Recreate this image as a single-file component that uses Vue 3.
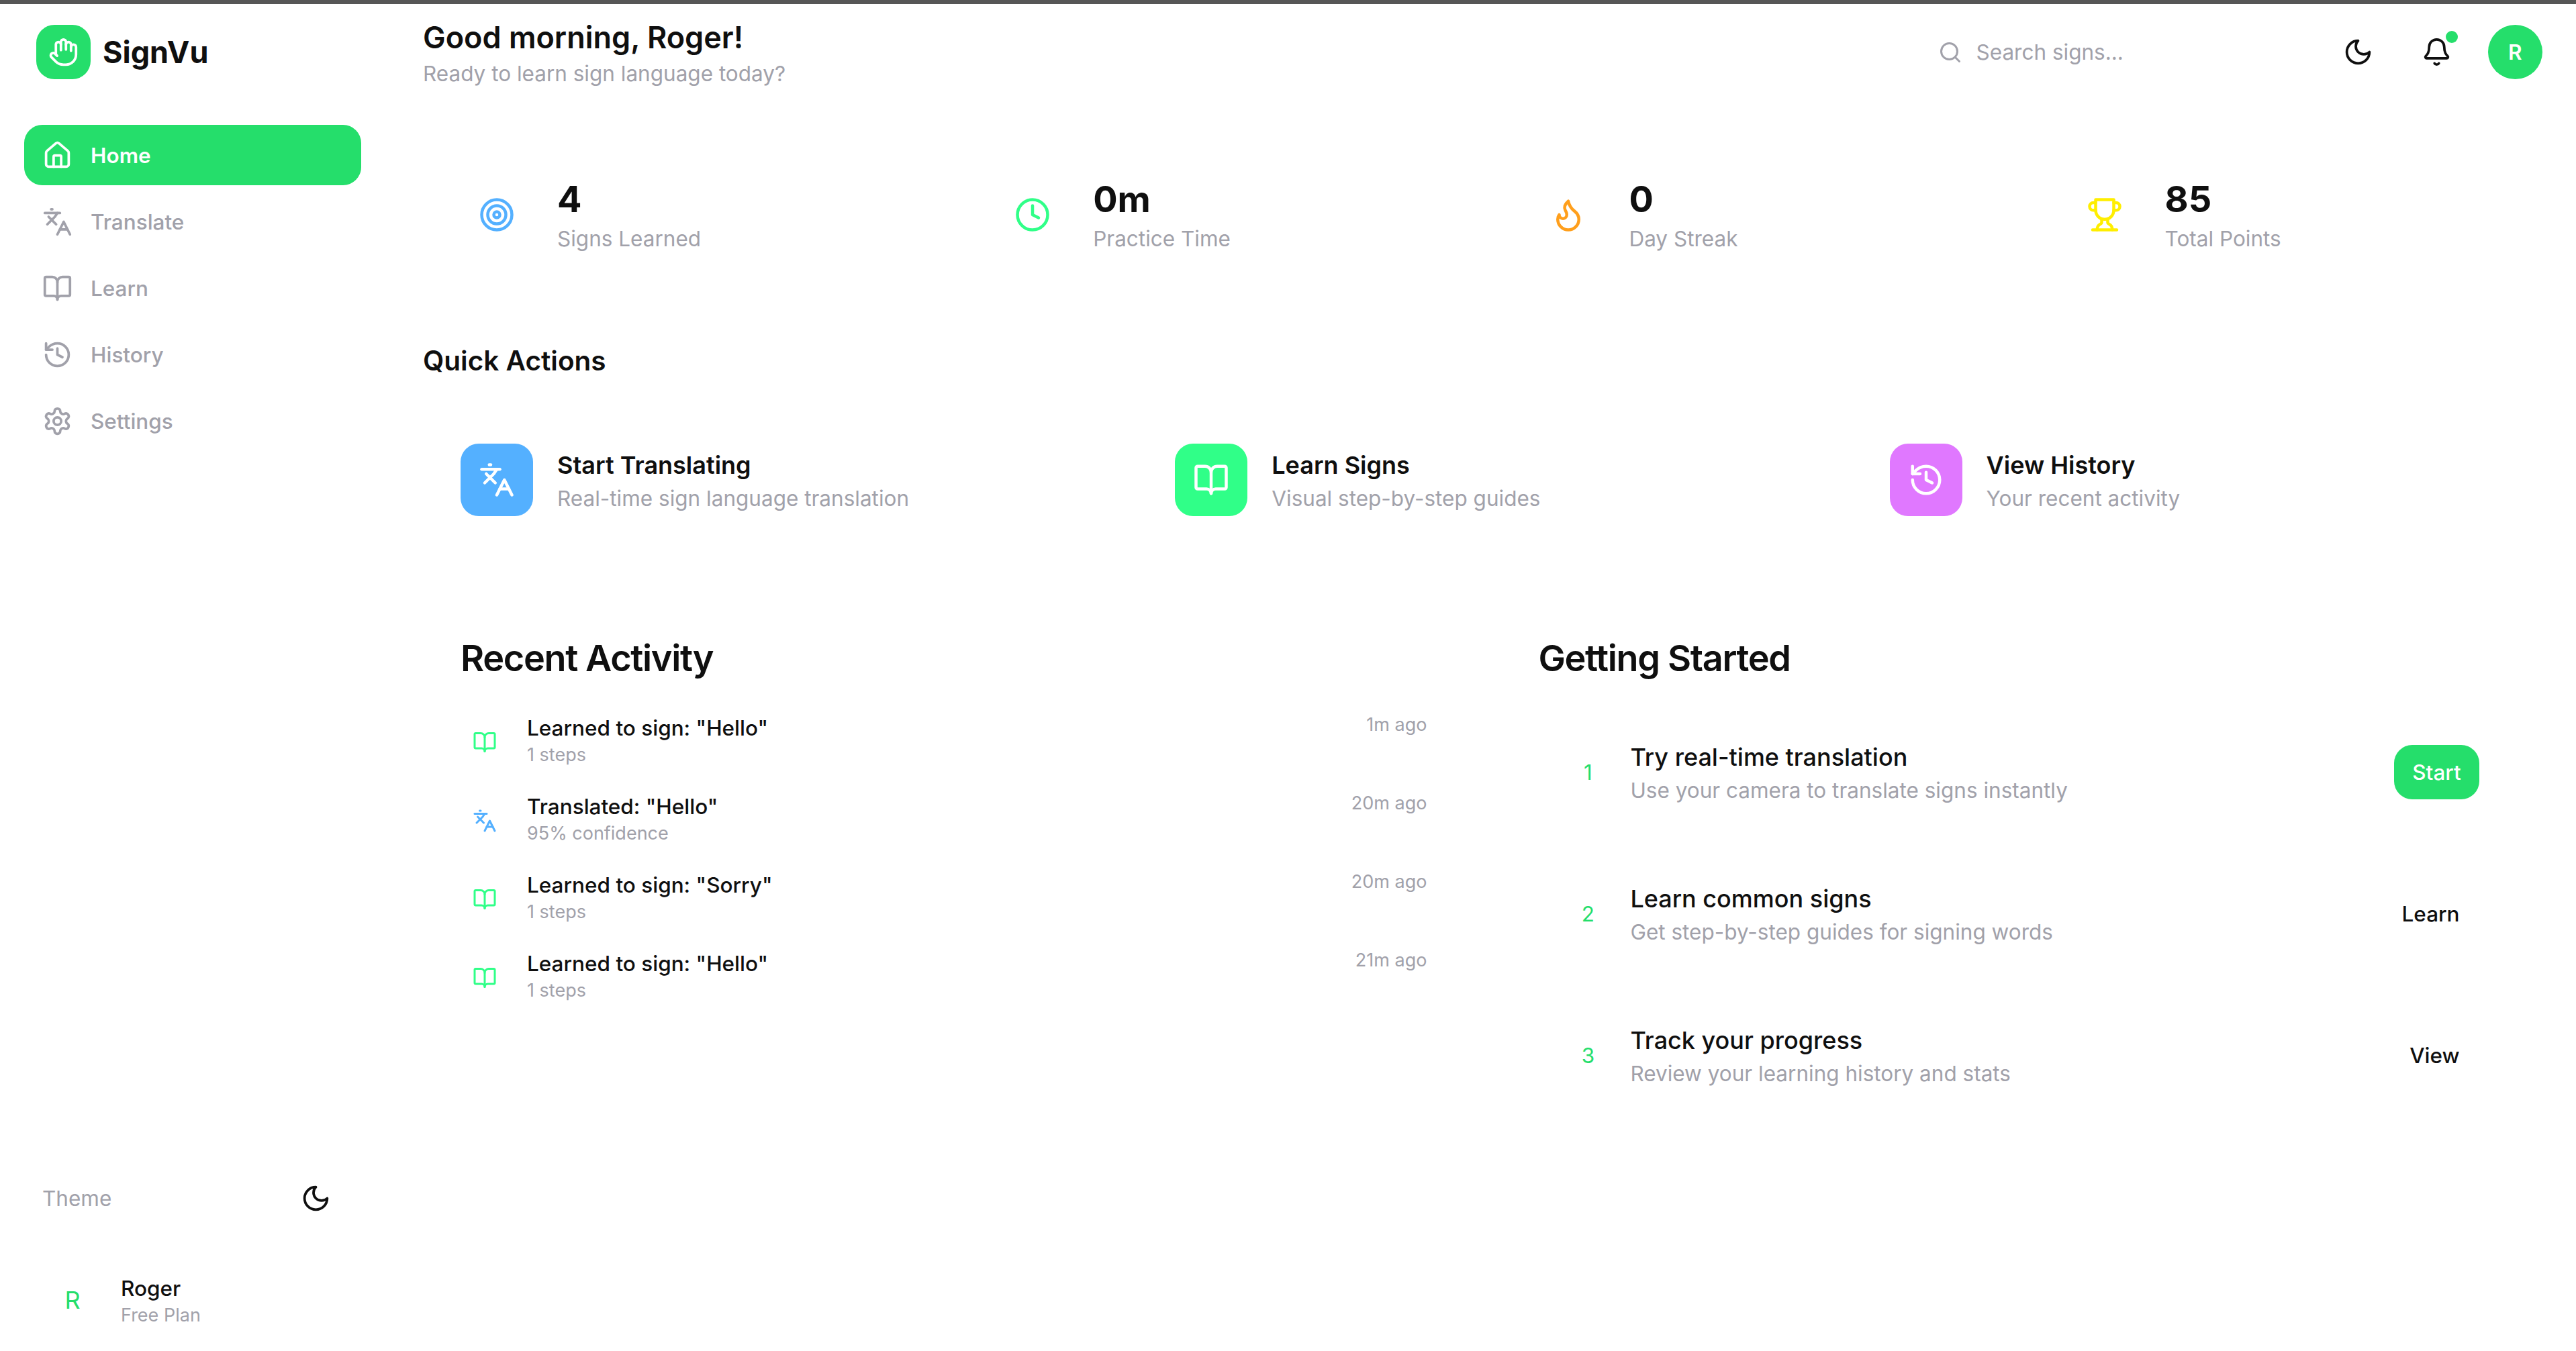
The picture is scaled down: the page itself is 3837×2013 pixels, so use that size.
<script setup>
const ic = {
  home: ['M15 21v-8a1 1 0 0 0-1-1h-4a1 1 0 0 0-1 1v8', 'M3 10a2 2 0 0 1 .709-1.528l7-5.999a2 2 0 0 1 2.582 0l7 5.999A2 2 0 0 1 21 10v9a2 2 0 0 1-2 2H5a2 2 0 0 1-2-2z'],
  translate: ['m5 8 6 6', 'm4 14 6-6 2-3', 'M2 5h12', 'M7 2h1', 'm22 22-5-10-5 10', 'M14 18h6'],
  book: ['M12 7v14', 'M3 18a1 1 0 0 1-1-1V4a1 1 0 0 1 1-1h5a4 4 0 0 1 4 4 4 4 0 0 1 4-4h5a1 1 0 0 1 1 1v13a1 1 0 0 1-1 1h-6a3 3 0 0 0-3 3 3 3 0 0 0-3-3z'],
  history: ['M3 12a9 9 0 1 0 9-9 9.75 9.75 0 0 0-6.74 2.74L3 8', 'M3 3v5h5', 'M12 7v5l4 2'],
  gear: ['M12.22 2h-.44a2 2 0 0 0-2 2v.18a2 2 0 0 1-1 1.73l-.43.25a2 2 0 0 1-2 0l-.15-.08a2 2 0 0 0-2.73.73l-.22.38a2 2 0 0 0 .73 2.73l.15.1a2 2 0 0 1 1 1.72v.51a2 2 0 0 1-1 1.74l-.15.09a2 2 0 0 0-.73 2.73l.22.38a2 2 0 0 0 2.73.73l.15-.08a2 2 0 0 1 2 0l.43.25a2 2 0 0 1 1 1.73V20a2 2 0 0 0 2 2h.44a2 2 0 0 0 2-2v-.18a2 2 0 0 1 1-1.73l.43-.25a2 2 0 0 1 2 0l.15.08a2 2 0 0 0 2.73-.73l.22-.39a2 2 0 0 0-.73-2.73l-.15-.08a2 2 0 0 1-1-1.74v-.5a2 2 0 0 1 1-1.74l.15-.09a2 2 0 0 0 .73-2.73l-.22-.38a2 2 0 0 0-2.73-.73l-.15.08a2 2 0 0 1-2 0l-.43-.25a2 2 0 0 1-1-1.73V4a2 2 0 0 0-2-2z', 'M15 12a3 3 0 1 1-6 0 3 3 0 0 1 6 0z'],
  moon: ['M12 3a6 6 0 0 0 9 9 9 9 0 1 1-9-9Z'],
  bell: ['M10.268 21a2 2 0 0 0 3.464 0', 'M3.262 15.326A1 1 0 0 0 4 17h16a1 1 0 0 0 .74-1.673C19.41 13.956 18 12.499 18 8A6 6 0 0 0 6 8c0 4.499-1.411 5.956-2.738 7.326'],
  search: ['m21 21-4.34-4.34', 'M19 11a8 8 0 1 1-16 0 8 8 0 0 1 16 0z'],
  target: ['M22 12a10 10 0 1 1-20 0 10 10 0 0 1 20 0z', 'M18 12a6 6 0 1 1-12 0 6 6 0 0 1 12 0z', 'M14 12a2 2 0 1 1-4 0 2 2 0 0 1 4 0z'],
  clock: ['M22 12a10 10 0 1 1-20 0 10 10 0 0 1 20 0z', 'M12 6v6l4 2'],
  flame: ['M8.5 14.5A2.5 2.5 0 0 0 11 12c0-1.38-.5-2-1-3-1.072-2.143-.224-4.054 2-6 .5 2.5 2 4.9 4 6.5 2 1.6 3 3.5 3 5.5a7 7 0 1 1-14 0c0-1.153.433-2.294 1-3a2.5 2.5 0 0 0 2.5 2.5z'],
  trophy: ['M6 9H4.5a2.5 2.5 0 0 1 0-5H6', 'M18 9h1.5a2.5 2.5 0 0 0 0-5H18', 'M4 22h16', 'M10 14.66V17c0 .55-.47.98-.97 1.21C7.85 18.75 7 20.24 7 22', 'M14 14.66V17c0 .55.47.98.97 1.21C16.15 18.75 17 20.24 17 22', 'M18 2H6v7a6 6 0 0 0 12 0V2Z'],
  hand: ['M18 11V6a2 2 0 0 0-2-2a2 2 0 0 0-2 2', 'M14 10V4a2 2 0 0 0-2-2a2 2 0 0 0-2 2v2', 'M10 10.5V6a2 2 0 0 0-2-2a2 2 0 0 0-2 2v8', 'M18 8a2 2 0 1 1 4 0v6a8 8 0 0 1-8 8h-2c-2.8 0-4.5-.86-5.99-2.34l-3.6-3.6a2 2 0 0 1 2.83-2.82L7 15'],
}
const nav = [
  { label: 'Home', icon: 'home', active: true },
  { label: 'Translate', icon: 'translate' },
  { label: 'Learn', icon: 'book' },
  { label: 'History', icon: 'history' },
  { label: 'Settings', icon: 'gear' },
]
const stats = [
  { v: '4', l: 'Signs Learned', icon: 'target', c: 'blue' },
  { v: '0m', l: 'Practice Time', icon: 'clock', c: 'mint' },
  { v: '0', l: 'Day Streak', icon: 'flame', c: 'orange' },
  { v: '85', l: 'Total Points', icon: 'trophy', c: 'yellow' },
]
const actions = [
  { t: 'Start Translating', s: 'Real-time sign language translation', icon: 'translate', c: 'bg-blue' },
  { t: 'Learn Signs', s: 'Visual step-by-step guides', icon: 'book', c: 'bg-mint' },
  { t: 'View History', s: 'Your recent activity', icon: 'history', c: 'bg-pink' },
]
const activity = [
  { t: 'Learned to sign: "Hello"', s: '1 steps', w: '1m ago', icon: 'book', c: 'mint' },
  { t: 'Translated: "Hello"', s: '95% confidence', w: '20m ago', icon: 'translate', c: 'blue' },
  { t: 'Learned to sign: "Sorry"', s: '1 steps', w: '20m ago', icon: 'book', c: 'mint' },
  { t: 'Learned to sign: "Hello"', s: '1 steps', w: '21m ago', icon: 'book', c: 'mint' },
]
const steps = [
  { n: 1, t: 'Try real-time translation', s: 'Use your camera to translate signs instantly', b: 'Start', primary: true },
  { n: 2, t: 'Learn common signs', s: 'Get step-by-step guides for signing words', b: 'Learn' },
  { n: 3, t: 'Track your progress', s: 'Review your learning history and stats', b: 'View' },
]
</script>

<template>
  <div class="page">
    <div class="topline"></div>
    <div class="shell">
      <aside class="side">
        <div class="brand">
          <span class="logo">
            <svg class="i20" viewBox="0 0 24 24"><path v-for="d in ic.hand" :key="d" :d="d" /></svg>
          </span>
          <span class="brandname">SignVu</span>
        </div>
        <nav class="nav">
          <a v-for="n in nav" :key="n.label" class="navitem" :class="{ active: n.active }">
            <svg class="i20" viewBox="0 0 24 24"><path v-for="d in ic[n.icon]" :key="d" :d="d" /></svg>
            <span>{{ n.label }}</span>
          </a>
        </nav>
        <div class="themerow">
          <span>Theme</span>
          <span class="themebtn"><svg class="i20 dark" viewBox="0 0 24 24"><path v-for="d in ic.moon" :key="d" :d="d" /></svg></span>
        </div>
        <div class="user">
          <span class="uavatar">R</span>
          <div>
            <div class="uname">Roger</div>
            <div class="uplan">Free Plan</div>
          </div>
        </div>
      </aside>
      <div class="content">
        <header class="head">
          <div>
            <h1>Good morning, Roger!</h1>
            <p>Ready to learn sign language today?</p>
          </div>
          <div class="tools">
            <div class="search">
              <svg class="i16" viewBox="0 0 24 24"><path v-for="d in ic.search" :key="d" :d="d" /></svg>
              <span>Search signs...</span>
            </div>
            <span class="tool"><svg class="i20 dark" viewBox="0 0 24 24"><path v-for="d in ic.moon" :key="d" :d="d" /></svg></span>
            <span class="tool bell"><svg class="i20 dark" viewBox="0 0 24 24"><path v-for="d in ic.bell" :key="d" :d="d" /></svg><i class="dot"></i></span>
            <span class="avatar">R</span>
          </div>
        </header>
        <main class="main">
          <section class="stats">
            <div v-for="s in stats" :key="s.l" class="stat">
              <span class="static" :class="s.c"><svg class="i24" viewBox="0 0 24 24"><path v-for="d in ic[s.icon]" :key="d" :d="d" /></svg></span>
              <div>
                <div class="statv">{{ s.v }}</div>
                <div class="statl">{{ s.l }}</div>
              </div>
            </div>
          </section>
          <h2 class="qa">Quick Actions</h2>
          <section class="actions">
            <div v-for="a in actions" :key="a.t" class="action">
              <span class="acticon" :class="a.c"><svg class="i24" viewBox="0 0 24 24"><path v-for="d in ic[a.icon]" :key="d" :d="d" /></svg></span>
              <div>
                <div class="actt">{{ a.t }}</div>
                <div class="acts">{{ a.s }}</div>
              </div>
            </div>
          </section>
          <section class="cols">
            <div class="card">
              <h3>Recent Activity</h3>
              <div v-for="(r, i) in activity" :key="i" class="arow">
                <span class="aicon" :class="r.c"><svg class="i16" viewBox="0 0 24 24"><path v-for="d in ic[r.icon]" :key="d" :d="d" /></svg></span>
                <div class="atext">
                  <div class="at">{{ r.t }}</div>
                  <div class="as">{{ r.s }}</div>
                </div>
                <span class="aw">{{ r.w }}</span>
              </div>
            </div>
            <div class="card">
              <h3>Getting Started</h3>
              <div class="steps">
                <div v-for="s in steps" :key="s.n" class="step">
                  <span class="num">{{ s.n }}</span>
                  <div class="stext">
                    <div class="st">{{ s.t }}</div>
                    <div class="ss">{{ s.s }}</div>
                  </div>
                  <span class="btn" :class="{ primary: s.primary }">{{ s.b }}</span>
                </div>
              </div>
            </div>
          </section>
        </main>
      </div>
    </div>
  </div>
</template>

<style scoped>
.page { zoom: 2.25; width: 1705.33px; height: 894.67px; overflow: hidden; background: #fff; color: #0f0f0f; font-family: Inter, "Noto Sans", sans-serif; font-size: 14px; line-height: 20px; }
.topline { height: 2.5px; background: #565656; }
.shell { display: flex; height: 892.17px; }
svg { fill: none; stroke: currentColor; stroke-width: 2; stroke-linecap: round; stroke-linejoin: round; display: block; flex: none; }
.i16 { width: 16px; height: 16px; }
.i20 { width: 20px; height: 20px; }
.i24 { width: 24px; height: 24px; }
.dark { color: #0f0f0f; }
.side { width: 256px; flex: none; display: flex; flex-direction: column; padding: 14px 16px 15.5px; box-sizing: border-box; border-right: 1px solid transparent; }
.brand { display: flex; align-items: center; gap: 8px; padding-left: 8px; height: 36px; }
.logo { width: 36px; height: 36px; border-radius: 12px; background: #25de6b; color: #fff; display: flex; align-items: center; justify-content: center; }
.brandname { font-size: 20px; font-weight: 700; line-height: 28px; }
.nav { display: flex; flex-direction: column; gap: 4px; margin-top: 30.3px; flex: 1; }
.navitem { height: 40px; border-radius: 12px; display: flex; align-items: center; gap: 12px; padding: 0 12px; color: #a1a1aa; font-weight: 500; }
.navitem.active { background: #25de6b; color: #fff; font-weight: 600; }
.themerow { display: flex; align-items: center; justify-content: space-between; padding: 0 20px 0 12px; color: #a1a1aa; height: 36px; margin-bottom: 31.4px; }
.themebtn { display: flex; }
.user { display: flex; align-items: center; gap: 16px; padding-left: 16px; }
.uavatar { width: 32px; height: 32px; display: flex; align-items: center; justify-content: center; color: #25de6b; font-size: 16px; }
.uname { font-weight: 500; line-height: 20px; }
.uplan { font-size: 12px; line-height: 16px; color: #a1a1aa; }
.content { flex: 1; min-width: 0; display: flex; flex-direction: column; }
.head { display: flex; justify-content: space-between; align-items: center; padding: 8px 22.3px 8px 24px; }
.head h1 { margin: 0; font-size: 20px; line-height: 28px; font-weight: 600; }
.head p { margin: 0; color: #a1a1aa; }
.tools { display: flex; align-items: center; gap: 16px; }
.search { width: 256px; display: flex; align-items: center; gap: 9px; color: #a1a1aa; padding-left: 12.2px; box-sizing: border-box; }
.tool { width: 36px; height: 36px; display: flex; align-items: center; justify-content: center; position: relative; }
.dot { position: absolute; top: 4px; right: 4px; width: 8px; height: 8px; border-radius: 50%; background: #25de6b; }
.avatar { width: 36px; height: 36px; border-radius: 50%; background: #25de6b; color: #fff; font-weight: 600; display: flex; align-items: center; justify-content: center; }
.main { padding: 24.7px 22.3px 0 24px; }
.stats { display: grid; grid-template-columns: repeat(4, 1fr); gap: 16px; }
.stat { display: flex; align-items: center; gap: 16px; padding: 24px; border: 1px solid transparent; }
.static { width: 48px; height: 48px; display: flex; align-items: center; justify-content: center; }
.blue { color: #54b0ff; }
.mint { color: #30ff88; }
.orange { color: #ff9f1c; }
.yellow { color: #ffee00; }
.statv { font-size: 24px; line-height: 32px; font-weight: 700; }
.statl { color: #a1a1aa; }
.qa { margin: 32px 0 16px; font-size: 18px; line-height: 28px; font-weight: 600; }
.actions { display: grid; grid-template-columns: repeat(3, 1fr); gap: 16px; }
.action { display: flex; align-items: center; gap: 16px; padding: 24px; border: 1px solid transparent; }
.acticon { width: 48px; height: 48px; border-radius: 12px; color: #fff; display: flex; align-items: center; justify-content: center; }
.bg-blue { background: #54b0ff; }
.bg-mint { background: #30ff88; }
.bg-pink { background: #e078ff; }
.actt { font-size: 16px; line-height: 24px; font-weight: 600; }
.acts { color: #a1a1aa; }
.cols { display: grid; grid-template-columns: 1fr 1fr; gap: 24px; margin-top: 28.2px; }
.card { padding: 24px; border: 1px solid transparent; }
.card h3 { margin: 0 0 12px; font-size: 24px; line-height: 32px; font-weight: 600; letter-spacing: -0.6px; }
.arow { display: flex; align-items: center; gap: 12px; padding: 8px 0; }
.aicon { width: 32px; height: 32px; display: flex; align-items: center; justify-content: center; margin-top: 3px; }
.atext { flex: 1; }
.at { font-weight: 500; }
.as { font-size: 12px; line-height: 16px; color: #a1a1aa; }
.aw { font-size: 12px; line-height: 16px; color: #a1a1aa; align-self: flex-start; }
.steps { display: flex; flex-direction: column; gap: 16px; margin-top: 20.4px; }
.step { display: flex; align-items: center; gap: 12px; padding: 16px; border: 1px solid transparent; }
.num { width: 32px; text-align: center; color: #25de6b; flex: none; }
.stext { flex: 1; }
.st { font-size: 16px; line-height: 24px; font-weight: 500; }
.ss { color: #a1a1aa; }
.btn { height: 36px; padding: 0 13px 0 12px; border-radius: 12px; display: flex; align-items: center; font-weight: 500; }
.btn.primary { background: #25de6b; color: #fff; padding: 0 12px; }
</style>
